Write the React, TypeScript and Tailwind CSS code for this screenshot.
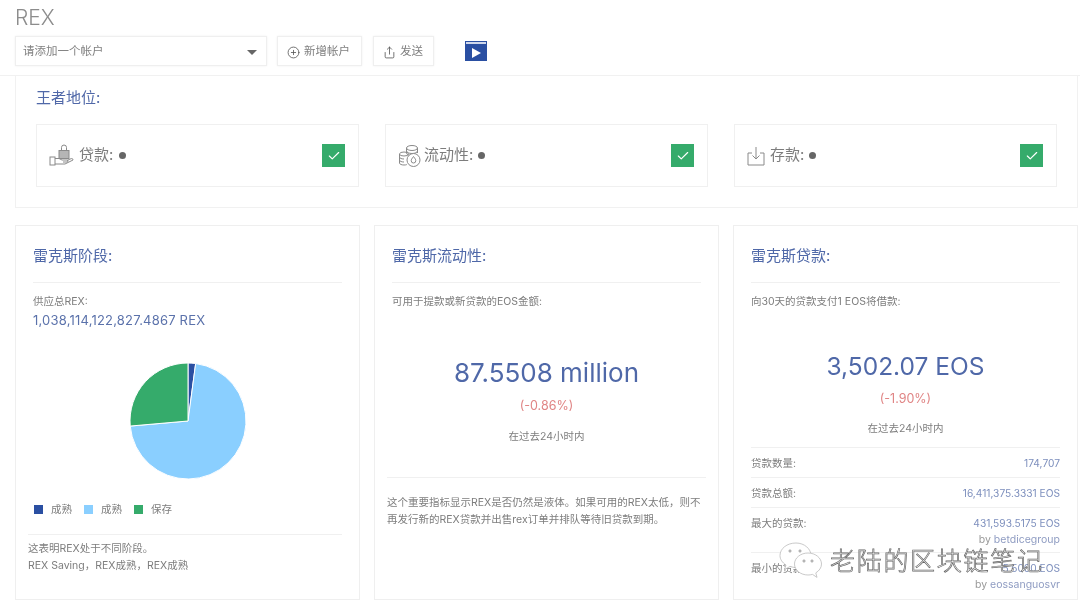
import { Check, CirclePlus, Share } from "lucide-react";

const font = "font-['Inter','Noto_Sans_CJK_SC',sans-serif]";

function polar(angle: number, r = 58) {
  const a = ((angle - 90) * Math.PI) / 180;
  return `${60 + r * Math.cos(a)} ${60 + r * Math.sin(a)}`;
}

function slice(from: number, to: number) {
  const large = to - from > 180 ? 1 : 0;
  return `M60 60 L${polar(from)} A58 58 0 ${large} 1 ${polar(to)} Z`;
}

function LoanIcon() {
  return (
    <svg width="26" height="24" viewBox="0 0 26 24" fill="none" stroke="#8a8a8a" strokeWidth="1">
      <rect x="1" y="13" width="5" height="8" />
      <path d="M6 14.500h4l3 1.500h5c1.500 0 1.500 2 0 2h-4M6 20h10l8-4c0-1.500-1-1.500-2-1.300l-4 1.800" />
      <rect x="10" y="6.500" width="10" height="8" fill="#b5b5b5" />
      <path d="M12.500 6.500V3.500a2.500 2.500 0 0 1 5 0v3" />
    </svg>
  );
}

function CoinIcon() {
  return (
    <svg width="24" height="24" viewBox="0 0 24 24" fill="none" stroke="#8a8a8a" strokeWidth="1">
      <ellipse cx="14" cy="4" rx="5.500" ry="2.500" />
      <path d="M8.500 4v5c0 1 1 2 3 2.300M19.500 4v5M8.500 7c0 1.300 2.500 2.500 5.500 2.500s5.500-1.200 5.500-2.500" />
      <ellipse cx="6" cy="10" rx="4.500" ry="2" />
      <path d="M1.500 10v9c0 1.200 2 2 4.500 2 1 0 2-.1 2.800-.4M1.500 13c0 1.200 2 2 4.500 2M1.500 16c0 1.200 2 2 4.500 2" />
      <circle cx="15.500" cy="16" r="6.500" fill="#fff" />
      <path d="M15.500 12.500c-1.500 2-2.300 3-2.300 4.200a2.300 2.300 0 0 0 4.600 0c0-1.200-.8-2.200-2.300-4.200z" />
    </svg>
  );
}

function SaveIcon() {
  return (
    <svg width="18" height="20" viewBox="0 0 18 20" fill="none" stroke="#8a8a8a" strokeWidth="1">
      <path d="M5 7H1v12h16V7h-4M9 1v12M5.500 9.500L9 13l3.500-3.500" />
    </svg>
  );
}

function StatusCard({ icon, label, gap, dot }: { icon: React.ReactNode; label: string; gap: string; dot: string }) {
  return (
    <div className="flex h-[63px] w-[323px] items-center border border-[#f0f0f0] pr-[13px] pl-3">
      <div className={`flex items-center ${gap}`}>
        {icon}
        <span className="text-[15px] text-[#7d7d7d]">{label}:</span>
        <span className={`flex h-[7px] w-[7px] rounded-full bg-[#666] ${dot}`} />
      </div>
      <div className="ml-auto flex h-[23px] w-[23px] items-center justify-center bg-[#35ab6b]">
        <Check className="h-3.5 w-3.5 text-white" strokeWidth={2} />
      </div>
    </div>
  );
}

function LoanRow({ label, value, by, last }: { label: string; value: string; by?: string; last?: boolean }) {
  return (
    <div className={`flex justify-between pt-[9px] text-[10.5px] leading-[13px] ${by ? "h-[45px]" : "h-[30px]"} ${last ? "" : "border-b border-[#f0f0f0]"}`}>
      <span className="text-[#7d7d7d]">{label}</span>
      <div className="text-right">
        <p className="text-[10.2px] text-[#7d8fbd]">{value}</p>
        {by && (
          <p className="mt-[3px] text-[#999]">
            by <span className="text-[#8f9cc2]">{by}</span>
          </p>
        )}
      </div>
    </div>
  );
}

export default function App() {
  return (
    <div className={`relative h-[609px] w-[1080px] overflow-hidden bg-white blur-[0.4px] ${font}`}>
      <header className="h-[76px] border-b border-[#f1f1f1] pt-[6px] pl-[15px]">
        <h1 className="text-[21px] leading-[23px] font-light text-[#8c8c8c]">REX</h1>
        <div className="mt-[7px] flex items-center">
          <div className="flex h-[30px] w-[252px] items-center justify-between border border-[#efefef] pt-[2px] pr-[9px] pl-[7px] text-[11.5px] text-[#808080] shadow-[0_0_2px_#f0f0f0]">
            请添加一个帐户
            <svg width="10" height="5" viewBox="0 0 10 5"><path d="M0 0h10L5 5z" fill="#666" /></svg>
          </div>
          <button className="ml-[10px] flex h-[30px] w-[85px] items-center gap-[4px] border border-[#efefef] pt-[2px] pl-[9px] text-[11.5px] text-[#808080] shadow-[0_0_2px_#f0f0f0]">
            <CirclePlus className="h-[13px] w-[13px] text-[#555]" strokeWidth={1.500} />
            新增帐户
          </button>
          <button className="ml-[11px] flex h-[30px] w-[61px] items-center gap-[4px] border border-[#efefef] pt-[2px] pl-[9px] text-[11.5px] text-[#808080] shadow-[0_0_2px_#f0f0f0]">
            <Share className="h-[13px] w-[13px] text-[#555]" strokeWidth={1.500} />
            发送
          </button>
          <div className="ml-[31px] flex h-[20px] w-[22px] flex-col bg-[#2a4fa2]">
            <div className="mx-[1px] mt-[1px] h-[2px] bg-[#cfd8ec]" />
            <svg className="mx-auto mt-[4px]" width="9" height="10" viewBox="0 0 9 10"><path d="M0 0l9 5-9 5z" fill="#fff" /></svg>
          </div>
        </div>
      </header>

      <section className="mr-[2px] ml-[15px] h-[132px] border-x border-b border-[#f1f1f1] pt-[13px] pl-[20px]">
        <h2 className="text-[15px] leading-[18px] text-[#5068a8]">王者地位:</h2>
        <div className="mt-[17px] flex gap-[26px]">
          <StatusCard icon={<LoanIcon />} label="贷款" gap="gap-[4px]" dot="ml-[2px]" />
          <StatusCard icon={<CoinIcon />} label="流动性" gap="gap-[2px]" dot="ml-[3px]" />
          <StatusCard icon={<SaveIcon />} label="存款" gap="gap-[5px]" dot="ml-0" />
        </div>
      </section>

      <div className="mt-[17px] ml-[15px] flex gap-[14px]">
        <article className="h-[375px] w-[345px] border border-[#efefef] px-[17px] pt-[20px]">
          <h2 className="h-[37px] border-b border-[#f0f0f0] text-[15px] leading-[20px] text-[#4f68a8]">雷克斯阶段:</h2>
          <p className="mt-[12px] text-[10.5px] leading-[13px] text-[#7d7d7d]">供应总REX:</p>
          <p className="mt-[3px] text-[13px] leading-[18px] tracking-[0.2px] text-[#5b72ab]">1,038,114,122,827.4867 REX</p>
          <svg className="mt-[32px] ml-[95px]" width="120" height="120" viewBox="0 0 120 120">
            <g stroke="#fff" strokeWidth="1">
              <path d={slice(0, 7.600)} fill="#2a4fa2" />
              <path d={slice(7.600, 265)} fill="#8acfff" />
              <path d={slice(265, 360)} fill="#35ab6b" />
            </g>
          </svg>
          <div className="mt-[21px] ml-[1px] flex items-center text-[10.5px] text-[#7d7d7d]">
            <span className="h-[9px] w-[9px] bg-[#2a4fa2]" />
            <span className="ml-[8px]">成熟</span>
            <span className="ml-[12px] h-[9px] w-[9px] bg-[#8acfff]" />
            <span className="ml-[8px]">成熟</span>
            <span className="ml-[12px] h-[9px] w-[9px] bg-[#35ab6b]" />
            <span className="ml-[8px]">保存</span>
          </div>
          <div className="mt-[16px] -ml-[5px] border-t border-[#f0f0f0] pt-[5px] text-[10.5px] leading-[17px] text-[#7d7d7d]">
            <p>这表明REX处于不同阶段。</p>
            <p>REX Saving，REX成熟，REX成熟</p>
          </div>
        </article>

        <article className="h-[375px] w-[345px] border border-[#efefef] px-[17px] pt-[20px]">
          <h2 className="h-[37px] border-b border-[#f0f0f0] text-[15px] leading-[20px] text-[#4f68a8]">雷克斯流动性:</h2>
          <p className="mt-[12px] text-[10.5px] leading-[13px] text-[#7d7d7d]">可用于提款或新贷款的EOS金额:</p>
          <p className="mt-[48px] text-center text-[26px] leading-[34px] text-[#4f68a8]">87.5508 million</p>
          <p className="mt-[7px] text-center text-[12.5px] leading-[18px] text-[#e08585]">(-0.86%)</p>
          <p className="mt-[15px] text-center text-[10.5px] leading-[13px] text-[#7d7d7d]">在过去24小时内</p>
          <div className="mt-[34px] -mx-[5px] border-t border-[#f0f0f0] pt-[16px] text-[10.5px] leading-[17px] text-[#7d7d7d]">
            这个重要指标显示REX是否仍然是液体。如果可用的REX太低，则不再发行新的REX贷款并出售rex订单并排队等待旧贷款到期。
          </div>
        </article>

        <article className="h-[375px] w-[345px] border border-[#efefef] px-[17px] pt-[20px]">
          <h2 className="h-[37px] border-b border-[#f0f0f0] text-[15px] leading-[20px] text-[#4f68a8]">雷克斯贷款:</h2>
          <p className="mt-[12px] text-[10.5px] leading-[13px] text-[#7d7d7d]">向30天的贷款支付1 EOS将借款:</p>
          <p className="mt-[41px] text-center text-[24.5px] leading-[34px] text-[#4f68a8]">3,502.07 EOS</p>
          <p className="mt-[7px] text-center text-[12.5px] leading-[18px] text-[#e08585]">(-1.90%)</p>
          <p className="mt-[14px] text-center text-[10.5px] leading-[13px] text-[#7d7d7d]">在过去24小时内</p>
          <div className="mt-[12px] border-t border-[#f0f0f0]">
            <LoanRow label="贷款数量:" value="174,707" />
            <LoanRow label="贷款总额:" value="16,411,375.3331 EOS" />
            <LoanRow label="最大的贷款:" value="431,593.5175 EOS" by="betdicegroup" />
            <LoanRow label="最小的贷款:" value="5.5000 EOS" by="eossanguosvr" last />
          </div>
        </article>
      </div>

      <div className="absolute top-[542px] left-[778px] flex items-center gap-[6px]">
        <svg width="46" height="38" viewBox="0 0 46 38" fill="#fff" stroke="#bbb" strokeWidth="0.800">
          <path d="M18 1C9 1 2 6.500 2 13.500c0 4 2.300 7 6 9.500l-1.500 4.500 5.500-3c2 .6 4 1 6 1 8.500 0 15-5.500 15-12S26.500 1 18 1z" />
          <path d="M30 11c-7.500 0-13.500 5-13.500 11s6 11 13.500 11c1.500 0 3-.2 4.500-.6l4.500 3-1.200-4.500c3.500-2.200 5.700-5.300 5.700-8.900 0-6-6-11-13.500-11z" />
          <circle cx="12" cy="9" r="1.200" fill="#aaa" />
          <circle cx="22" cy="9" r="1.200" fill="#aaa" />
          <circle cx="26" cy="19" r="1.200" fill="#aaa" />
          <circle cx="34" cy="19" r="1.200" fill="#aaa" />
        </svg>
        <span className="text-[25px] leading-[34px] font-light tracking-[1.700px] whitespace-nowrap text-white [-webkit-text-stroke:0.7px_#666]">老陆的区块链笔记</span>
      </div>
    </div>
  );
}
